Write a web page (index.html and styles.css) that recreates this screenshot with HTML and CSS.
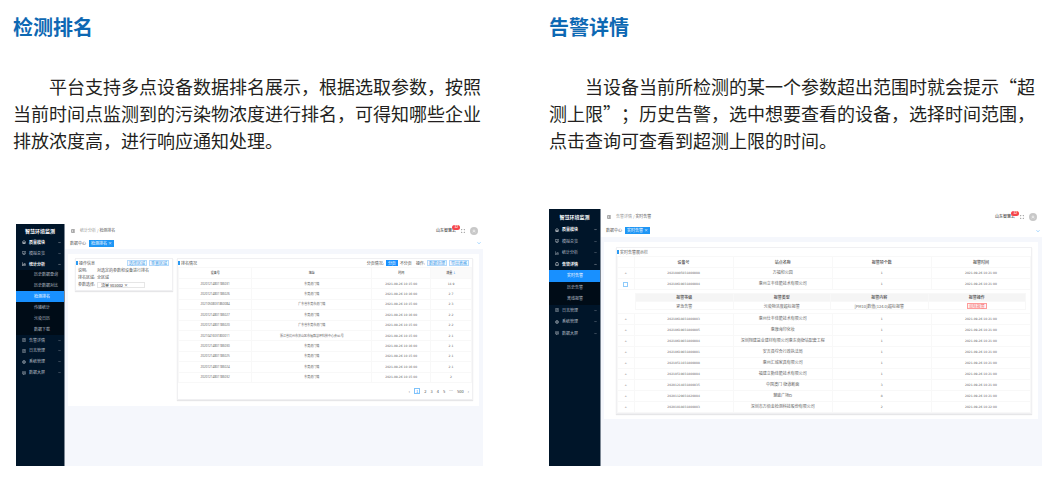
FILE: index.html
```html
<!DOCTYPE html>
<html lang="zh-CN">
<head>
<meta charset="utf-8">
<title>智慧环境监测</title>
<link rel="stylesheet" href="styles.css">
</head>
<body>
<svg class="sprite" aria-hidden="true">
  <symbol id="home" viewBox="0 0 16 16"><path d="M1 8l7-6 7 6M3 7v7h10V7M6 14v-4h4v4"/></symbol>
  <symbol id="screen" viewBox="0 0 16 16"><path d="M1 2h14v9H1zM4 15h8M8 11v4M5 7l2 2 4-4"/></symbol>
  <symbol id="chart" viewBox="0 0 16 16"><path d="M1 1v14h14M5 12V8M9 12V4M13 12V6"/></symbol>
  <symbol id="bell" viewBox="0 0 16 16"><path d="M3 12V6a5 5 0 0 1 10 0v6M1 13h14M6 15h4"/></symbol>
  <symbol id="doc" viewBox="0 0 16 16"><path d="M3 1h10v14H3zM6 5h5M6 8h5M6 11h3"/></symbol>
  <symbol id="gear" viewBox="0 0 16 16"><circle cx="8" cy="8" r="6"/><path d="M2 8h12M8 2v12"/></symbol>
  <symbol id="wide" viewBox="0 0 16 16"><path d="M1 3h14v8H1zM4 14h4M10 14h3M4 7h8"/></symbol>
  <symbol id="down" viewBox="0 0 16 16"><path d="M2 5l6 6 6-6"/></symbol>
  <symbol id="up" viewBox="0 0 16 16"><path d="M2 11l6-6 6 6"/></symbol>
  <symbol id="bars" viewBox="0 0 16 16"><path d="M1 2h14M6 6h9M6 10h9M1 14h14M1 6l3 2-3 2z"/></symbol>
  <symbol id="full" viewBox="0 0 16 16"><path d="M1 5V2h4M11 2h4v3M15 11v3h-4M5 14H1v-3"/></symbol>
  <symbol id="user" viewBox="0 0 16 16"><circle cx="8" cy="6" r="3"/><path d="M3 14a5 5 0 0 1 10 0"/></symbol>
</svg>

<main class="page">
  <article class="feature">
    <h2>检测排名</h2>
    <p>平台支持多点设备数据排名展示，根据选取参数，按照当前时间点监测到的污染物浓度进行排名，可得知哪些企业排放浓度高，进行响应通知处理。</p>
    <section class="app app-rank" aria-label="检测排名界面">
      <nav class="side">
        <div class="brand">智慧环境监测</div>
        <ul class="menu menu-rank">
          <li><a class="on" href="#"><svg><use href="#home"/></svg>质量模块<svg class="arrow"><use href="#down"/></svg></a></li>
          <li><a href="#"><svg><use href="#screen"/></svg>模拟总览<svg class="arrow"><use href="#down"/></svg></a></li>
          <li><a class="on" href="#"><svg><use href="#chart"/></svg>统计分析<svg class="arrow"><use href="#up"/></svg></a></li>
          <li class="sub"><a href="#">历史数据查询</a></li>
          <li class="sub"><a href="#">历史数据对比</a></li>
          <li class="sub"><a class="current" href="#">检测排名</a></li>
          <li class="sub"><a href="#">传输统计</a></li>
          <li class="sub"><a href="#">污染日历</a></li>
          <li class="sub"><a href="#">数据下载</a></li>
          <li><a href="#"><svg><use href="#doc"/></svg>告警详情<svg class="arrow"><use href="#down"/></svg></a></li>
          <li><a href="#"><svg><use href="#doc"/></svg>日志管理<svg class="arrow"><use href="#down"/></svg></a></li>
          <li><a href="#"><svg><use href="#gear"/></svg>系统管理<svg class="arrow"><use href="#down"/></svg></a></li>
          <li><a href="#"><svg><use href="#wide"/></svg>数据大屏<svg class="arrow"><use href="#down"/></svg></a></li>
        </ul>
      </nav>
      <div class="work">
        <header class="top">
          <svg><use href="#bars"/></svg>
          <span class="crumbs"><span>统计分析 / </span>检测排名</span>
          <span class="account">山东智慧云<b class="badge">12</b></span>
          <svg><use href="#full"/></svg>
          <span class="avatar"><svg><use href="#user"/></svg></span>
        </header>
        <div class="tabs"><a href="#">数据中心</a><a class="tab" href="#">检测排名 ×</a><svg class="more"><use href="#down"/></svg></div>
        <div class="canvas canvas-rank">
          <section class="card card-info">
            <div class="card-head"><h3>操作信息</h3><button>选择区域</button><button>重置区域</button></div>
            <div class="field"><span>说明:</span><span>对选定的参数和设备进行排名</span></div>
            <div class="field"><span>排名区域:</span><span>全区域</span></div>
            <div class="field"><label for="param">参数选择:</label><input id="param" value="流量 v03002 ×"></div>
          </section>
          <section class="card card-list">
            <div class="card-head"><h3>排名情况</h3><span>分页情况:</span><button class="solid">分页</button><span>不分页</span><span class="op">操作:</span><button>数据处理</button><button>导出表格</button></div>
            <table class="rank">
              <colgroup><col class="r1"><col class="r2"><col class="r3"><col class="r4"></colgroup>
              <thead><tr><th>设备号</th><th>地址</th><th>时间</th><th class="sorted">流量 <i>↓</i></th></tr></thead>
              <tbody>
                <tr><td>20201214801186031</td><td>东莞虎门镇</td><td>2021-09-26 10:15:00</td><td>14.9</td></tr>
                <tr><td>20201214801186026</td><td>东莞虎门镇</td><td>2021-09-26 10:16:00</td><td>2.7</td></tr>
                <tr><td>20210508031860084</td><td>广东省东莞市虎门镇</td><td>2021-09-26 10:15:00</td><td>2.3</td></tr>
                <tr><td>20201214801186027</td><td>东莞虎门镇</td><td>2021-09-26 10:16:00</td><td>2.2</td></tr>
                <tr><td>20201214801186020</td><td>广东省东莞市虎门镇</td><td>2021-09-26 10:15:00</td><td>2.2</td></tr>
                <tr><td>20210416031800011</td><td>浙江省杭州市萧山区市福路慧环科技中心会91号</td><td>2021-09-26 10:15:00</td><td>2.1</td></tr>
                <tr><td>20201214801186030</td><td>东莞虎门镇</td><td>2021-09-26 10:16:00</td><td>2.1</td></tr>
                <tr><td>20201214801186025</td><td>东莞虎门镇</td><td>2021-09-26 10:15:00</td><td>2.1</td></tr>
                <tr><td>20201214801186024</td><td>东莞虎门镇</td><td>2021-09-26 10:16:00</td><td>2.1</td></tr>
                <tr><td>20201214801186032</td><td>东莞虎门镇</td><td>2021-09-26 10:15:00</td><td>2</td></tr>
              </tbody>
            </table>
            <nav class="pager"><a href="#">‹</a><a class="here" href="#">1</a><a href="#">2</a><a href="#">3</a><a href="#">4</a><a href="#">5</a><span>…</span><a href="#">500</a><a href="#">›</a></nav>
          </section>
        </div>
      </div>
    </section>
  </article>

  <article class="feature">
    <h2>告警详情</h2>
    <p>当设备当前所检测的某一个参数超出范围时就会提示“超测上限”；历史告警，选中想要查看的设备，选择时间范围，点击查询可查看到超测上限的时间。</p>
    <section class="app app-alarm" aria-label="告警详情界面">
      <nav class="side">
        <div class="brand">智慧环境监测</div>
        <ul class="menu menu-alarm">
          <li><a class="on" href="#"><svg><use href="#home"/></svg>质量模块<svg class="arrow"><use href="#down"/></svg></a></li>
          <li><a href="#"><svg><use href="#screen"/></svg>模拟总览<svg class="arrow"><use href="#down"/></svg></a></li>
          <li><a href="#"><svg><use href="#chart"/></svg>统计分析<svg class="arrow"><use href="#down"/></svg></a></li>
          <li><a class="on" href="#"><svg><use href="#bell"/></svg>告警详情<svg class="arrow"><use href="#up"/></svg></a></li>
          <li class="sub"><a class="current" href="#">实时告警</a></li>
          <li class="sub"><a href="#">历史告警</a></li>
          <li class="sub"><a href="#">离线报警</a></li>
          <li><a href="#"><svg><use href="#doc"/></svg>日志管理<svg class="arrow"><use href="#down"/></svg></a></li>
          <li><a href="#"><svg><use href="#gear"/></svg>系统管理<svg class="arrow"><use href="#down"/></svg></a></li>
          <li><a href="#"><svg><use href="#wide"/></svg>数据大屏<svg class="arrow"><use href="#down"/></svg></a></li>
        </ul>
      </nav>
      <div class="work">
        <header class="top">
          <svg><use href="#bars"/></svg>
          <span class="crumbs"><span>告警详情 / </span>实时告警</span>
          <span class="account">山东智慧云<b class="badge">12</b></span>
          <svg><use href="#full"/></svg>
          <span class="avatar"><svg><use href="#user"/></svg></span>
        </header>
        <div class="tabs"><a href="#">数据中心</a><a class="tab" href="#">实时告警 ×</a><svg class="more"><use href="#down"/></svg></div>
        <div class="canvas canvas-alarm">
          <section class="card">
            <div class="card-head"><h3>实时告警展示栏</h3></div>
            <table class="alarm">
              <colgroup><col class="a1"><col class="a2"><col class="a2"><col class="a2"><col class="a2"></colgroup>
              <thead><tr><th></th><th>设备号</th><th>站点名称</th><th>报警项个数</th><th>报警时间</th></tr></thead>
              <tbody>
                <tr><td><button class="fold">+</button></td><td>20210805031800008</td><td>万福和公园</td><td>1</td><td>2021-09-26 10:21:00</td></tr>
                <tr><td><button class="fold open" aria-label="收起"></button></td><td>20210619031800004</td><td>惠州立丰佳能技术有限公司</td><td>1</td><td>2021-09-26 10:21:00</td></tr>
                <tr class="expanded"><td class="nest" colspan="5">
                  <table class="detail">
                    <thead><tr><th>报警等级</th><th>报警类型</th><th>报警内容</th><th>报警操作</th></tr></thead>
                    <tbody><tr><td>紧急告警</td><td>污染物浓度超标报警</td><td>[PM10]数值(124.0)超标报警</td><td><button class="danger">消除报警</button></td></tr></tbody>
                  </table>
                </td></tr>
                <tr><td><button class="fold">+</button></td><td>20210618031800003</td><td>惠州仕丰佳能技术有限公司</td><td>1</td><td>2021-09-26 10:21:00</td></tr>
                <tr><td><button class="fold">+</button></td><td>20210619031800005</td><td>惠康海印化妆</td><td>1</td><td>2021-09-26 10:21:00</td></tr>
                <tr><td><button class="fold">+</button></td><td>20210619031800004</td><td>深圳翔建益业建材有限公司惠东南街站配套工程</td><td>1</td><td>2021-09-26 10:21:00</td></tr>
                <tr><td><button class="fold">+</button></td><td>20210619031800001</td><td>安吉县综合行政执法局</td><td>1</td><td>2021-09-26 10:21:00</td></tr>
                <tr><td><button class="fold">+</button></td><td>20210511031800008</td><td>惠州汇城家具有限公司</td><td>1</td><td>2021-09-26 10:21:00</td></tr>
                <tr><td><button class="fold">+</button></td><td>20210519031800004</td><td>福建立勤佳能技术有限公司</td><td>1</td><td>2021-09-26 10:21:00</td></tr>
                <tr><td><button class="fold">+</button></td><td>20201214031800035</td><td>中国澳门 街道断面</td><td>3</td><td>2021-09-26 10:21:00</td></tr>
                <tr><td><button class="fold">+</button></td><td>20201129031820004</td><td>慧盛广场D</td><td>8</td><td>2021-09-26 10:21:00</td></tr>
                <tr><td><button class="fold">+</button></td><td>20201018031800003</td><td>深圳市万佰金检测科技股份有限公司</td><td>2</td><td>2021-09-26 10:22:00</td></tr>
              </tbody>
            </table>
          </section>
        </div>
      </div>
    </section>
  </article>
</main>
</body>
</html>
```

FILE: styles.css
```css
* { box-sizing: border-box; }
body {
  margin: 0;
  background: #fff;
  color: #231f20;
  font-family: "Noto Sans CJK SC", sans-serif;
}
a { color: inherit; text-decoration: none; }
.sprite { position: absolute; width: 0; height: 0; }
svg { fill: none; stroke: currentColor; stroke-width: 2; }

/* Page text */
.page {
  display: grid;
  grid-template-columns: 470fr 493fr;
  gap: 66px;
  padding: 12px 14px 20px 13px;
}
.feature { display: flex; flex-direction: column; min-height: 454px; }
.feature h2 {
  margin: 0 0 31px;
  color: #0d68b3;
  font-size: 20px;
  line-height: 30px;
  font-weight: 700;
}
.feature p {
  margin: 0;
  font-size: 18px;
  line-height: 27px;
  text-indent: 36px;
  text-spacing-trim: space-all;
}

/* Application frame */
.app {
  display: flex;
  margin-top: auto;
  font-size: 4px;
  line-height: 5px;
  color: #555;
}
.app-rank { margin-left: 3px; min-height: 242px; }
.app-alarm { min-height: 257px; }
.app svg { width: 4px; height: 4px; flex: none; }
.side { flex: none; background: #001529; color: #b4bcc4; border-right: 1px solid #7d8895; }
.app-rank .side { width: 49px; }
.app-alarm .side { width: 52px; }
.brand {
  color: #fff;
  font-size: 5px;
  line-height: 13px;
  font-weight: 700;
  text-align: center;
}
.app-alarm .brand { line-height: 15px; }
.menu { display: grid; grid-auto-rows: 1fr; margin: 0; padding: 0; list-style: none; }
.menu-rank { height: 141px; }
.menu-alarm { height: 115px; }
.menu a { display: flex; align-items: center; height: 100%; padding: 0 3px 0 6px; gap: 3px; }
.menu .on { color: #fff; font-weight: 700; }
.menu .arrow { width: 3px; height: 3px; margin-left: auto; }
.menu .sub { background: #000c17; }
.menu .sub a { padding: 0 0 0 18px; }
.menu .current { background: #1890ff; color: #fff; }

.work { flex: 1; min-width: 0; display: flex; flex-direction: column; background: #f5f7fc; }
.top { display: flex; align-items: center; gap: 5px; height: 13px; padding: 0 5px 0 6px; background: #fff; }
.app-alarm .top { height: 15px; }
.crumbs { flex: 1; }
.crumbs span { color: #999; }
.account { position: relative; color: #222; }
.badge {
  position: absolute;
  right: -4px;
  top: -3px;
  padding: 0 2px;
  border-radius: 3px;
  background: #f5454b;
  color: #fff;
  font-size: 3px;
  line-height: 5px;
}
.avatar { display: grid; place-items: center; width: 8px; height: 8px; border-radius: 50%; background: #c8c8c8; color: #fff; }
.tabs { display: flex; align-items: center; gap: 3px; height: 12px; padding: 0 2px 0 5px; background: #fff; }
.app-alarm .tabs { height: 13px; }
.tab { padding: 1px 2px; background: #1e96f5; color: #fff; }
.tabs .more { margin-left: auto; color: #40a9ff; }

/* Cards */
.canvas { margin: 5px 4px 0 3px; background: #fff; }
.canvas-rank { display: flex; align-items: flex-start; gap: 4px; padding: 4px 6px 6px 7px; }
.canvas-alarm { padding: 5px 6px 5px 12px; }
.card { border: 1px solid #f0f0f2; box-shadow: 0 1px 1px #e6e6e8; }
.card-info { flex: 97; padding-bottom: 2px; }
.card-list { flex: 297; }
.card-head { display: flex; align-items: center; gap: 2px; height: 8px; padding-right: 3px; }
.card h3 { flex: 1; margin: 0; border-left: 2px solid #2b9af3; padding-left: 1px; font-size: 4px; font-weight: 400; line-height: 4px; }
.card button {
  padding: 0 1px;
  border: 1px solid #b5dafc;
  border-radius: 0;
  background: #f2f9ff;
  color: #3d9be8;
  font: inherit;
  line-height: 4px;
}
.card .solid { background: #1890ff; border-color: #1890ff; color: #fff; }
.op { margin-left: 2px; }
.field { display: grid; grid-template-columns: 19px 1fr; align-items: center; height: 7px; padding-left: 2px; }
.field input {
  width: 48px;
  height: 6px;
  padding: 0 3px;
  border: 1px solid #e6e6e6;
  color: #333;
  font: inherit;
}

/* Tables */
table { width: 100%; border-collapse: collapse; table-layout: fixed; text-align: center; }
th, td { padding: 0; border: 1px solid #f8f8f8; font-size: 3px; line-height: 4px; }
td { color: #666; font-family: "DejaVu Sans", "Noto Sans CJK SC", sans-serif; }
th { color: #444; font-weight: 500; }
.rank { height: 116px; }
.rank td:first-child { font-family: "Noto Sans", sans-serif; }
.rank thead tr { height: 11px; }
.r1 { width: 25%; }
.r2 { width: 41%; }
.r3 { width: 20%; }
.r4 { width: 14%; }
.sorted { background: #fafafa; }
.sorted i { color: #1890ff; font-style: normal; }
.pager { display: flex; justify-content: flex-end; align-items: center; gap: 4px; height: 16px; padding-right: 3px; }
.pager .here { padding: 0 1px; border: 1px solid #7fc3fa; color: #1890ff; line-height: 4px; }

.alarm { height: 157px; }
.alarm tr { height: 11px; }
.alarm .expanded { height: 24px; }
.a1 { width: 4%; }
.a2 { width: 24%; }
.alarm th, .alarm td:nth-child(3), .alarm .detail td { font-size: 4px; }
.card .fold { width: 5px; height: 5px; padding: 0; border: 0; background: none; color: #777; line-height: 5px; display: block; margin: 0 auto; }
.card .open { border: 1px solid #8fcbfa; background: #fff; }
.alarm .nest { padding: 1px 4px 1px 17px; }
.alarm .detail tr { height: 8px; }
.detail th { background: #f5f5f5; }
.detail td { font-family: "Noto Sans CJK SC", sans-serif; }
.card .danger { display: block; margin: 0 auto; border-color: #ff9c9c; background: #fff5f5; color: #f56c6c; }
```
